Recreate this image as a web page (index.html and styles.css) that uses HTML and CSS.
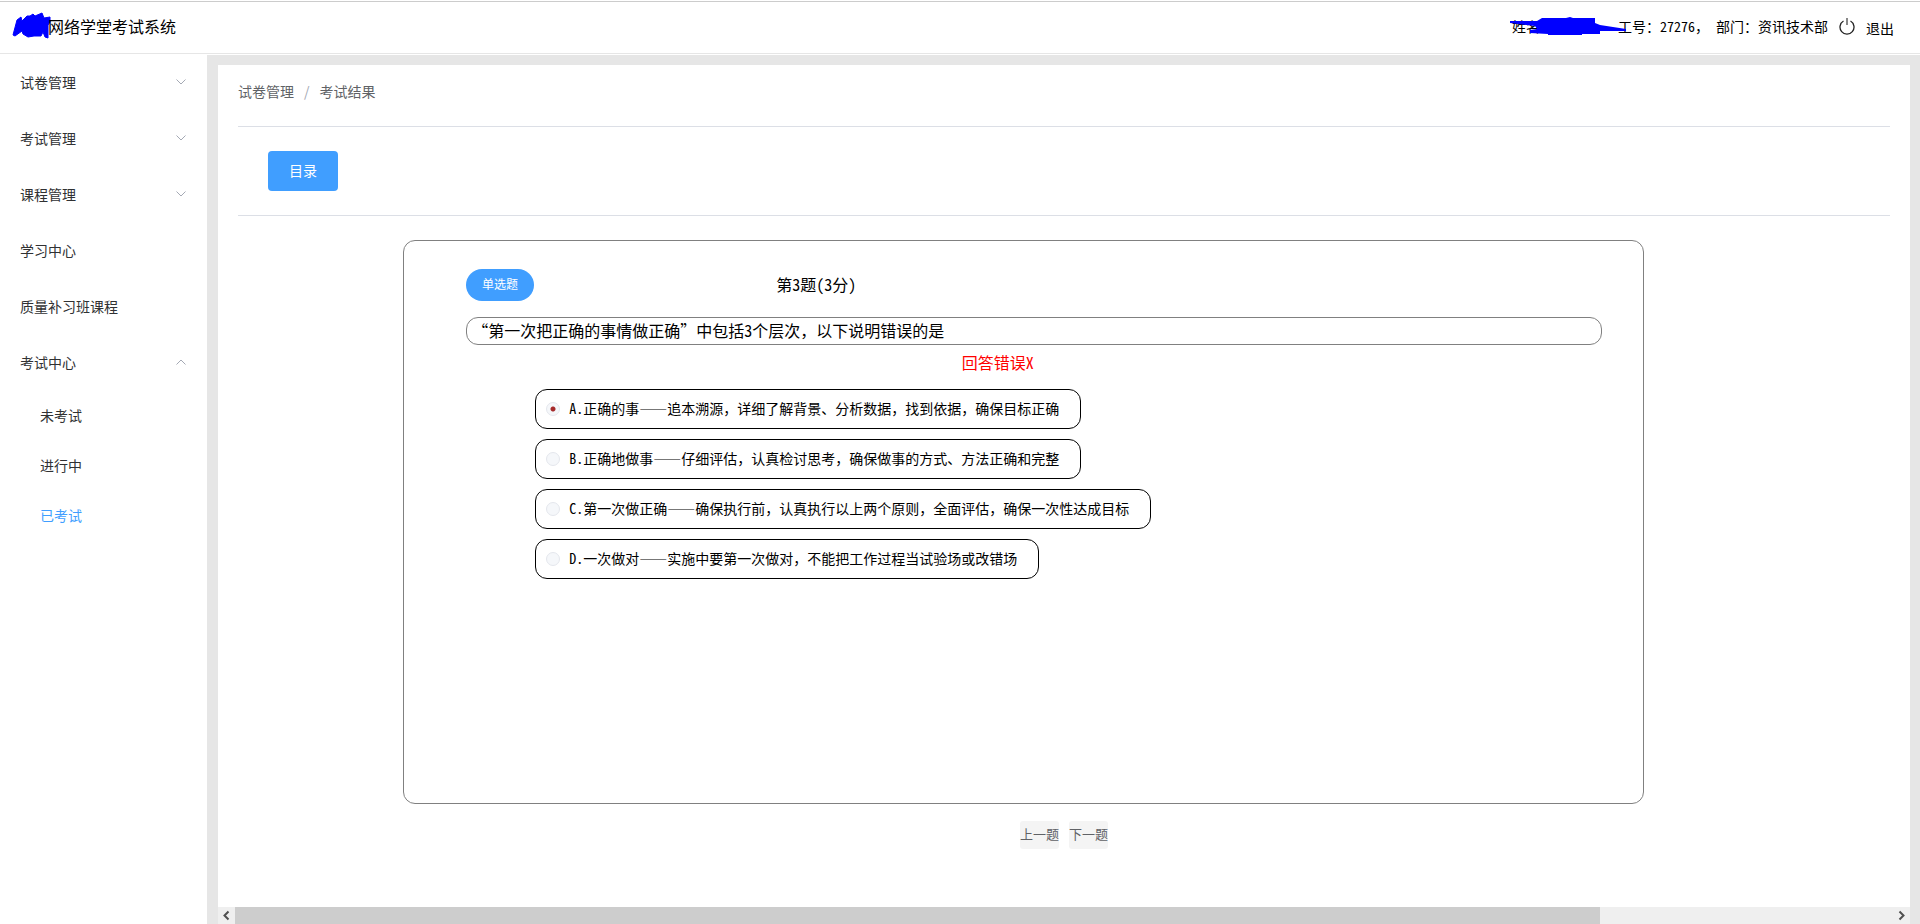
FILE: index.html
```html
<!DOCTYPE html>
<html lang="zh-CN">
<head>
<meta charset="utf-8">
<title>网络学堂考试系统</title>
<link rel="stylesheet" href="styles.css">
</head>
<body>
<header class="topbar">
  <div class="brand">
    <svg class="brand-mark" width="40" height="28" viewBox="0 0 40 28" aria-hidden="true"><path d="M1 23 L5 8 L9 5 L10 9 L15 4 L18 4 L21 2 L23 4 L30 1 L32 6 L38 5 L38 10 L36 13 L36 26 L33 25 L31 20 L29 24 L22 24 L16 25 L11 22 L10 19 L3 24 Z" fill="#00f" stroke="#00f" stroke-linejoin="round"/></svg>
    <span class="brand-name">网络学堂考试系统</span>
  </div>
  <div class="user">
    <span class="user-name">姓名
      <svg class="user-mask" width="116" height="20" viewBox="0 0 116 20" aria-hidden="true"><path d="M0 4 H27 L32 1 H56 L60 0 L63 1 H85 V6 L90 8 L116 12 V14 L90 14 V17 L72 17 V18 L38 18 V17 L20 16 V13 L27 12 L25 9 L0 6 Z" fill="#00f"/></svg>
    </span>
    <span class="user-info">工号：<span class="half">27276</span>，<span class="half"> </span>部门：资讯技术部</span>
    <svg class="power" width="16" height="18" viewBox="0 0 16 18" aria-hidden="true"><path d="M4.500 4 A7 7 0 1 0 11.500 4" fill="none" stroke="#222" stroke-width="1.300"/><path d="M8 1 V8" stroke="#888" stroke-width="2"/></svg>
    <a class="logout" href="#">退出</a>
  </div>
</header>
<div class="body">
  <nav class="sidebar">
    <a class="item" href="#">试卷管理<svg class="arrow" width="10" height="6" viewBox="0 0 10 6"><path d="M0.500 0.500 L5 5 L9.500 0.500"/></svg></a>
    <a class="item" href="#">考试管理<svg class="arrow" width="10" height="6" viewBox="0 0 10 6"><path d="M0.500 0.500 L5 5 L9.500 0.500"/></svg></a>
    <a class="item" href="#">课程管理<svg class="arrow" width="10" height="6" viewBox="0 0 10 6"><path d="M0.500 0.500 L5 5 L9.500 0.500"/></svg></a>
    <a class="item" href="#">学习中心</a>
    <a class="item" href="#">质量补习班课程</a>
    <a class="item" href="#">考试中心<svg class="arrow" width="10" height="6" viewBox="0 0 10 6"><path d="M0.500 5.500 L5 1 L9.500 5.500"/></svg></a>
    <a class="item sub" href="#">未考试</a>
    <a class="item sub" href="#">进行中</a>
    <a class="item sub active" href="#">已考试</a>
  </nav>
  <main class="main">
    <div class="panel">
      <div class="content">
        <div class="crumbs"><a href="#">试卷管理</a><span class="slash">/</span><span>考试结果</span></div>
        <div class="toolbar"><button class="catalog" type="button">目录</button></div>
        <section class="card">
          <div class="card-head">
            <div class="kind"><button class="pill" type="button">单选题</button></div>
            <div class="title half">第3题(3分)</div>
          </div>
          <div class="question">“第一次把正确的事情做正确”中包括<span class="half">3</span>个层次，以下说明错误的是</div>
          <div class="result half">回答错误X</div>
          <div class="options">
            <label class="option"><input type="radio" name="answer" checked><span class="half">A.</span>正确的事——追本溯源，详细了解背景、分析数据，找到依据，确保目标正确</label>
            <label class="option"><input type="radio" name="answer"><span class="half">B.</span>正确地做事——仔细评估，认真检讨思考，确保做事的方式、方法正确和完整</label>
            <label class="option"><input type="radio" name="answer"><span class="half">C.</span>第一次做正确——确保执行前，认真执行以上两个原则，全面评估，确保一次性达成目标</label>
            <label class="option"><input type="radio" name="answer"><span class="half">D.</span>一次做对——实施中要第一次做对，不能把工作过程当试验场或改错场</label>
          </div>
        </section>
        <div class="pager"><button type="button">上一题</button><button type="button">下一题</button></div>
      </div>
      <div class="scrollbar" aria-hidden="true">
        <svg class="scroll-arrow" width="17" height="17" viewBox="0 0 17 17"><path d="M10.500 4.500 L6.500 8.500 L10.500 12.500"/></svg>
        <div class="track"><div class="thumb"></div></div>
        <svg class="scroll-arrow" width="17" height="17" viewBox="0 0 17 17"><path d="M6.500 4.500 L10.500 8.500 L6.500 12.500"/></svg>
      </div>
    </div>
  </main>
</div>
</body>
</html>
```
FILE: styles.css
```css
* { box-sizing: border-box; }
body {
  margin: 0;
  height: 100vh;
  display: flex;
  flex-direction: column;
  background: #fff;
  color: #000;
  font-family: "Noto Sans CJK SC", sans-serif;
  font-size: 14px;
  line-height: 20px;
}
a { color: inherit; text-decoration: none; }
button { font: inherit; border: 0; padding: 0 0 2px; cursor: pointer; }
/* half-width Latin letters and digits, two to one ideograph */
.half { font-feature-settings: "hwid"; }

.topbar {
  flex: none;
  height: 54px;
  margin-bottom: 1px;
  padding: 0 26px 2px 12px;
  border-bottom: 1px solid #e6e6e6;
  box-shadow: inset 0 1px #fff, inset 0 2px #ccc;
  display: flex;
  align-items: center;
  justify-content: space-between;
}
.brand { display: flex; align-items: center; font-size: 16px; }
.brand-mark { margin-right: -4px; }
.user { display: flex; align-items: center; }
.user-name { position: relative; width: 106px; white-space: nowrap; }
.user-mask { position: absolute; left: -2px; top: 1px; }
.user-info { white-space: pre; }
.power { margin: 0 11px; }
.logout { padding-top: 4px; }

.body { flex: 1; min-height: 0; display: flex; }
.sidebar { flex: none; width: 207px; }
.item {
  display: flex;
  align-items: center;
  justify-content: space-between;
  height: 56px;
  padding: 0 21px 2px 20px;
  color: #303133;
}
.sub { height: 50px; padding-left: 40px; }
.active { color: #409eff; }
.arrow { fill: none; stroke: #a4a9b4; stroke-width: 1; }

.main { flex: 1; min-width: 0; background: #e6e6e6; padding: 10px 10px 0 11px; }
.panel { height: 100%; background: #fff; display: flex; flex-direction: column; }
.content { flex: 1; min-height: 0; padding: 0 20px; overflow: hidden; }
.crumbs {
  display: flex;
  height: 62px;
  padding-top: 16px;
  border-bottom: 1px solid #dcdfe6;
  color: #606266;
}
.slash { margin: 0 10px; color: #a4a9b4; }
.toolbar { padding: 24px 30px; border-bottom: 1px solid #dcdfe6; }
.catalog {
  display: block;
  width: 70px;
  height: 40px;
  border-radius: 4px;
  background: #409eff;
  color: #fff;
}
.card {
  box-sizing: content-box;
  width: 75%;
  min-height: 534px;
  margin: 24px 0 0 10%;
  border: 1px solid #808080;
  border-radius: 12px;
  padding-top: 28px;
  font-size: 16px;
}
.card-head { display: flex; align-items: center; padding-left: 5%; }
.kind { width: 310px; }
.title { padding-bottom: 3px; }
.pill {
  display: block;
  width: 68px;
  height: 32px;
  border-radius: 16px;
  background: #409eff;
  color: #fff;
  font-size: 12px;
}
.question {
  margin: 16px 41px 0 5%;
  padding: 0 5px 2px;
  line-height: 24px;
  border: 1px solid #808080;
  border-radius: 12px;
}
.result { margin: 7px 0 0 45%; color: #f00; }
.options {
  display: flex;
  flex-direction: column;
  align-items: flex-start;
  gap: 10px;
  margin: 17px 0 0 131px;
  font-size: 14px;
}
.option {
  display: flex;
  align-items: center;
  height: 40px;
  padding: 0 21px 2px 10px;
  border: 1px solid #000;
  border-radius: 12px;
}
.option input {
  appearance: none;
  width: 14px;
  height: 14px;
  margin: 2px 9px 0 0;
  border: 1px solid #e4e7ed;
  border-radius: 50%;
  background: #f5f7fa;
}
.option input:checked { background: radial-gradient(circle, #a52a2a 2px, #f5f7fa 3px); }
.pager { display: flex; justify-content: center; gap: 10px; margin-top: 17px; }
.pager button {
  height: 28px;
  border-radius: 3px;
  background: #f4f4f4;
  color: #606266;
  font-size: 13px;
}

.scrollbar { flex: none; display: flex; height: 17px; background: #efefef; }
.track { flex: 1; }
.thumb { width: 82.3%; height: 17px; background: #cdcdcd; }
.scroll-arrow { fill: none; stroke: #505050; stroke-width: 2; }
```
